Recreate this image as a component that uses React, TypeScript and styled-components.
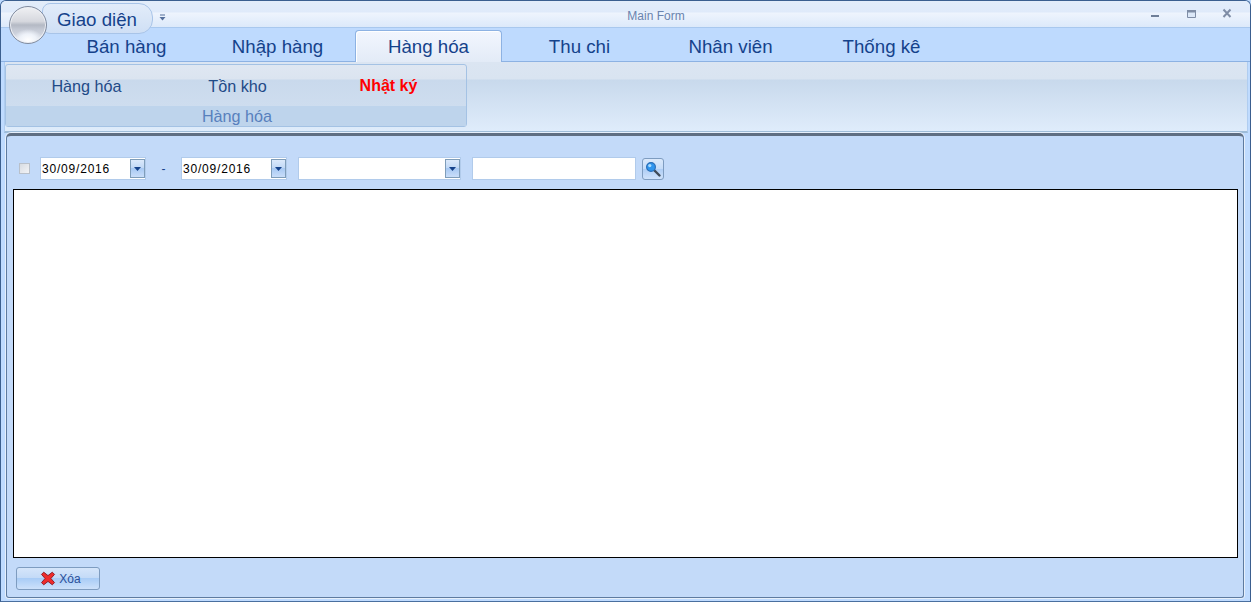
import React from 'react';
import styled, { createGlobalStyle } from 'styled-components';

const GlobalStyle = createGlobalStyle`
  html, body {
    margin: 0;
    padding: 0;
    background: #bfdbff;
  }
  * {
    box-sizing: border-box;
  }
`;

const Window = styled.div`
  position: relative;
  width: 1251px;
  height: 602px;
  display: flex;
  flex-direction: column;
  overflow: hidden;
  background: #bfdbff;
  border: 1px solid #3b5f8f;
  border-bottom-color: #4a6f9f;
  border-radius: 6px 6px 0 0;
  font-family: "Liberation Sans", Arial, sans-serif;
`;

const TitleBar = styled.div`
  height: 27px;
  flex: none;
  display: flex;
  align-items: center;
  background: linear-gradient(#e3edfa 0, #dfeafa 11px, #eef4fd 12px, #dce9fa 26px);
  border-bottom: 1px solid #a9c8ee;
  padding-left: 158px;
`;

const QuickArrow = styled.svg`
  width: 7px;
  height: 7px;
  flex: none;
  margin-top: 6px;
`;

const Caption = styled.div`
  flex: 1;
  text-align: center;
  padding-right: 4px;
  font-size: 12px;
  color: #6a83ae;
  margin-top: 3px;
`;

const WindowButtons = styled.div`
  display: flex;
  align-items: center;
  gap: 24px;
  padding-right: 16px;
`;

const Orb = styled.div`
  position: absolute;
  left: 8px;
  top: 5px;
  width: 38px;
  height: 38px;
  z-index: 3;
  border-radius: 50%;
  border: 1px solid #808b9e;
  box-shadow: inset 0 0 0 1px #eef0f5;
  background: radial-gradient(ellipse 15px 11px at 50% 92%, #ffffff 0, #eef2f9 55%, transparent 100%),
    linear-gradient(#f0f1f4 0, #d6d8de 40%, #b4b9c4 50%, #c4c9d4 62%, #e2e6ef 100%);
`;

const AppTab = styled.div`
  position: absolute;
  left: 41px;
  top: 2px;
  width: 111px;
  height: 31px;
  z-index: 2;
  display: flex;
  align-items: center;
  padding-left: 14px;
  padding-top: 3px;
  font-size: 18.7px;
  color: #15428b;
  background: linear-gradient(#e2ecfa 0, #d9e6f7 50%, #cfdff5 100%);
  border: 1px solid #a8c4e8;
  border-radius: 8px 14px 14px 8px;
`;

const TabStrip = styled.div`
  height: 34px;
  flex: none;
  display: flex;
  gap: 4px;
  padding-left: 52px;
  padding-top: 2px;
  background: #bedafe;
  border-bottom: 1px solid #8db2e3;
`;

const Tab = styled.div<{ $active?: boolean }>`
  width: 147px;
  height: 32px;
  display: flex;
  align-items: center;
  justify-content: center;
  padding-top: 1px;
  font-size: 18.7px;
  color: #15428b;
  border: 1px solid ${(p) => (p.$active ? '#8db2e3' : 'transparent')};
  border-bottom: none;
  border-radius: 4px 4px 0 0;
  background: ${(p) => (p.$active ? 'linear-gradient(#f2f6fe, #e3ebf7 100%)' : 'transparent')};
  box-shadow: ${(p) => (p.$active ? 'inset 1px 1px 0 #ffffff' : 'none')};
  z-index: ${(p) => (p.$active ? 1 : 0)};
  margin-bottom: -1px;
`;

const Ribbon = styled.div`
  height: 71px;
  flex: none;
  padding: 2px 0 3px 0;
  background: linear-gradient(#dbe5f2 0, #d9e4f1 17px, #c8d9ec 18px, #dfecfb 100%);
  border-left: 1px solid #b0cdf0;
  border-right: 1px solid #b0cdf0;
  margin: 0 2px 0 3px;
  border-bottom: 2px solid #9ebcd8;
`;

const Group = styled.div`
  width: 462px;
  height: 63px;
  display: flex;
  flex-direction: column;
  border: 1px solid #a4c2e4;
  border-radius: 3px;
  background: linear-gradient(#dfe7f2 0, #dbe4f0 14px, #c9d9ec 15px, #d2e0f1 100%);
`;

const GroupItems = styled.div`
  height: 41px;
  flex: none;
  display: grid;
  grid-template-columns: repeat(3, 151px);
  padding-left: 5px;
  padding-top: 12px;
`;

const GroupItem = styled.div<{ $selected?: boolean }>`
  text-align: center;
  font-size: ${(p) => (p.$selected ? 16 : 16.2)}px;
  font-weight: ${(p) => (p.$selected ? 700 : 400)};
  color: ${(p) => (p.$selected ? '#ff0000' : '#1f4a87')};
`;

const GroupLabel = styled.div`
  flex: 1;
  display: flex;
  align-items: center;
  justify-content: center;
  font-size: 16.2px;
  padding-top: 1px;
  padding-left: 2px;
  color: #5880bd;
  background: #bed4ec;
`;

const ContentFrame = styled.div`
  flex: 1;
  min-height: 0;
  margin: 0 6px 3px 5px;
  border: 1px solid #5e7ba0;
  border-top: 3px solid #5f6e82;
  border-radius: 5px 5px 3px 3px;
  padding: 21px 5px 7px 6px;
  display: flex;
  flex-direction: column;
  background: #c3daf9;
  box-shadow: 0 0 0 1px #e6effb;
`;

const Toolbar = styled.div`
  height: 23px;
  flex: none;
  display: flex;
  align-items: center;
`;

const CheckBox = styled.div`
  width: 11px;
  height: 11px;
  flex: none;
  margin-left: 6px;
  margin-right: 10px;
  border: 1px solid #b9c0ca;
  background: linear-gradient(135deg, #d8dce2, #f2f3f6);
`;

const Field = styled.div<{ $width: number; $gap?: number }>`
  width: ${(p) => p.$width}px;
  height: 23px;
  flex: none;
  margin-right: ${(p) => p.$gap ?? 0}px;
  display: flex;
  align-items: center;
  justify-content: space-between;
  padding: 0 0 0 1px;
  font-size: 12px;
  letter-spacing: 0.8px;
  color: #000000;
  background: #ffffff;
  border: 1px solid #b1cbeb;
`;

const DropButton = styled.div`
  width: 15px;
  height: 19px;
  flex: none;
  display: flex;
  align-items: center;
  justify-content: center;
  border: 1px solid #7f9db9;
  background: linear-gradient(#dbe9fb 0, #c2d9f6 45%, #a8c9f3 50%, #c9def9 100%);
`;

const Dash = styled.div`
  width: 35px;
  flex: none;
  text-align: center;
  font-size: 12px;
  color: #15428b;
`;

const SearchButton = styled.div`
  width: 22px;
  height: 22px;
  flex: none;
  display: flex;
  align-items: center;
  justify-content: center;
  background: linear-gradient(#dbe9fb 0, #c6dcf8 48%, #aecdf5 50%, #cfe2fb 100%);
  border: 1px solid #7e9cc0;
  border-radius: 3px;
`;

const GridArea = styled.div`
  flex: 1;
  min-height: 0;
  margin-top: 9px;
  background: #ffffff;
  border: 1px solid #000000;
`;

const Footer = styled.div`
  height: 23px;
  flex: none;
  margin-top: 9px;
  padding-left: 3px;
  display: flex;
`;

const DeleteButton = styled.div`
  width: 84px;
  height: 23px;
  display: flex;
  align-items: center;
  justify-content: center;
  gap: 3px;
  padding-left: 5px;
  font-size: 12px;
  color: #2a4f9a;
  border: 1px solid #7e9cc0;
  border-radius: 3px;
  background: linear-gradient(#d5e5fa 0, #c3daf7 48%, #a9ccf6 50%, #cde1fb 100%);
`;

const ArrowDown = () => (
  <svg width="7" height="4" viewBox="0 0 7 4">
    <path d="M0 0h7L3.5 4z" fill="#15428b" />
  </svg>
);

const App: React.FC = () => {
  return (
    <>
      <GlobalStyle />
      <Window>
        <Orb />
        <AppTab>Giao diện</AppTab>
        <TitleBar>
          <QuickArrow viewBox="0 0 7 7">
            <path d="M1 0.5h5v1H1z" fill="#56709c" />
            <path d="M0.5 3h6L3.5 6.5z" fill="#56709c" />
          </QuickArrow>
          <Caption>Main Form</Caption>
          <WindowButtons>
            <svg width="12" height="12" viewBox="0 0 12 12">
              <path d="M1 7h8v2H1z" fill="#6f7f98" />
            </svg>
            <svg width="12" height="12" viewBox="0 0 12 12">
              <path d="M1.5 2.5h8v7h-8z" fill="#dce8f8" stroke="#7f8da6" />
              <path d="M1 2h9v2.5H1z" fill="#7f8da6" />
            </svg>
            <svg width="12" height="12" viewBox="0 0 12 12">
              <path d="M1.5 1.5l7 7.5M8.5 1.5l-7 7.5" stroke="#7f8da6" strokeWidth="2" />
            </svg>
          </WindowButtons>
        </TitleBar>
        <TabStrip>
          <Tab>Bán hàng</Tab>
          <Tab>Nhập hàng</Tab>
          <Tab $active>Hàng hóa</Tab>
          <Tab>Thu chi</Tab>
          <Tab>Nhân viên</Tab>
          <Tab>Thống kê</Tab>
        </TabStrip>
        <Ribbon>
          <Group>
            <GroupItems>
              <GroupItem>Hàng hóa</GroupItem>
              <GroupItem>Tồn kho</GroupItem>
              <GroupItem $selected>Nhật ký</GroupItem>
            </GroupItems>
            <GroupLabel>Hàng hóa</GroupLabel>
          </Group>
        </Ribbon>
        <ContentFrame>
          <Toolbar>
            <CheckBox />
            <Field $width={106}>
              30/09/2016
              <DropButton><ArrowDown /></DropButton>
            </Field>
            <Dash>-</Dash>
            <Field $width={106} $gap={11}>
              30/09/2016
              <DropButton><ArrowDown /></DropButton>
            </Field>
            <Field $width={163} $gap={11}>
              <span />
              <DropButton><ArrowDown /></DropButton>
            </Field>
            <Field $width={164} $gap={6} />
            <SearchButton>
              <svg width="18" height="18" viewBox="0 0 18 18">
                <path d="M10.5 10.5l5 5" stroke="#3f4a57" strokeWidth="2.4" strokeLinecap="round" />
                <circle cx="7" cy="7" r="4.4" fill="#2f95ee" stroke="#2a6fb8" strokeWidth="1.2" />
                <circle cx="5.8" cy="5.6" r="1.6" fill="#a9dcff" />
              </svg>
            </SearchButton>
          </Toolbar>
          <GridArea />
          <Footer>
            <DeleteButton>
              <svg width="16" height="15" viewBox="0 0 15 15">
                <path
                  d="M3.2 1.2L7.5 4.6L11.8 1.2L14 3.4L10.4 7.5L14 11.6L11.8 13.8L7.5 10.4L3.2 13.8L1 11.6L4.6 7.5L1 3.4Z"
                  fill="#ef2b2b"
                  stroke="#8f1f2b"
                  strokeWidth="1"
                  strokeLinejoin="round"
                />
              </svg>
              Xóa
            </DeleteButton>
          </Footer>
        </ContentFrame>
      </Window>
    </>
  );
};

export default App;
